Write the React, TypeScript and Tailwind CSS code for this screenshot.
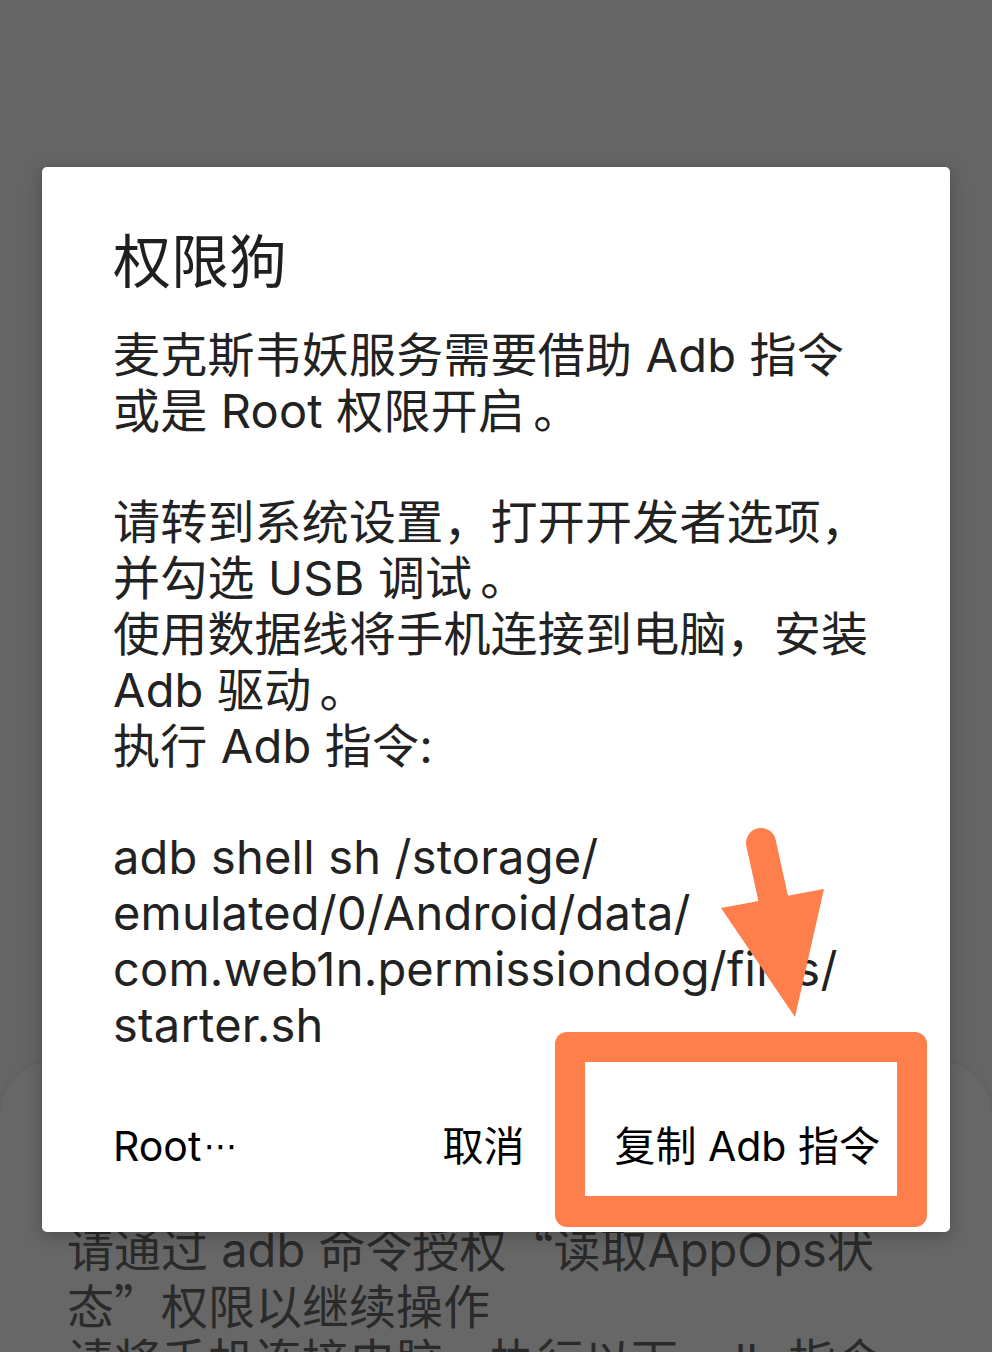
import React from 'react';

const FONT = "font-['Inter','Noto_Sans_CJK_SC',sans-serif]";
const CJK = "font-['Noto_Sans_CJK_SC',sans-serif]";

// full stop drawn centred in its cell like the phone's font
const Dot = () => <span className="inline-block translate-x-[8px]">。</span>;

const bodyLines: React.ReactNode[] = [
  '麦克斯韦妖服务需要借助 Adb 指令',
  <>或是 Root 权限开启<Dot /></>,
  '',
  '请转到系统设置，打开开发者选项，',
  <>并勾选 USB 调试<Dot /></>,
  '使用数据线将手机连接到电脑，安装',
  <>Adb 驱动<Dot /></>,
  '执行 Adb 指令:',
  '',
  'adb shell sh /storage/',
  'emulated/0/Android/data/',
  'com.web1n.permissiondog/files/',
  'starter.sh',
];

function Annotation() {
  // orange highlight drawn on top of the screenshot
  return (
    <svg
      className="absolute inset-0 pointer-events-none"
      width={992}
      height={1352}
      viewBox="0 0 992 1352"
    >
      <path
        fillRule="evenodd"
        fill="#fe7f4b"
        d="M567 1032 H915 A12 12 0 0 1 927 1044 V1215 A12 12 0 0 1 915 1227 H567 A12 12 0 0 1 555 1215 V1044 A12 12 0 0 1 567 1032 Z M585 1062 V1196 H897 V1062 Z"
      />
      <line x1="761" y1="843" x2="774" y2="902" stroke="#fe7f4b" strokeWidth="30" strokeLinecap="round" />
      <polygon points="721,908 824,889 795,1017" fill="#fe7f4b" />
    </svg>
  );
}

export default function App() {
  return (
    <div className={`relative h-[1352px] w-[992px] overflow-hidden bg-[#656565] ${FONT}`}>
      {/* page behind the dim overlay */}
      <div className="mt-[1060px] h-[400px] rounded-t-[56px] bg-[#676767] shadow-[0_-2px_6px_rgba(0,0,0,0.06)] pl-[67px] pt-[160px]">
        <p className="text-[47px] leading-[54px] text-[#2a2a2a]">
          请通过 adb 命令授权<span className={CJK}>“</span>读取AppOps状
          <br />
          态<span className={CJK}>”</span>权限以继续操作
          <br />
          请将手机连接电脑，执行以下 adb 指令
        </p>
      </div>

      {/* dialog */}
      <div className="absolute left-[42px] top-[167px] w-[908px] rounded-[5px] bg-white pl-[71px] pr-[70px] pt-[62px] pb-[62px] shadow-[0_4px_18px_rgba(0,0,0,0.25)]">
        <h2 className="text-[58px] leading-[66px] text-[#1f1f1f]">权限狗</h2>
        <div className="mt-[32px] text-[47px] leading-[55.8px] tracking-[0.2px] text-[#222222]">
          {bodyLines.map((line, i) => (
            <div key={i} className="h-[55.8px] whitespace-pre">
              {line}
            </div>
          ))}
        </div>
        <div className="mt-[70px] flex h-[48px] items-center text-[41px] leading-[48px] text-black">
          <span className="flex items-center h-[48px]">
            Root<span className="leading-none font-['DejaVu_Sans',sans-serif] text-[34px] ml-[2px]">⋯</span>
          </span>
          <div className="ml-auto flex items-center gap-[90px]">
            <span>取消</span>
            <span>复制 Adb 指令</span>
          </div>
        </div>
      </div>

      <Annotation />
    </div>
  );
}
